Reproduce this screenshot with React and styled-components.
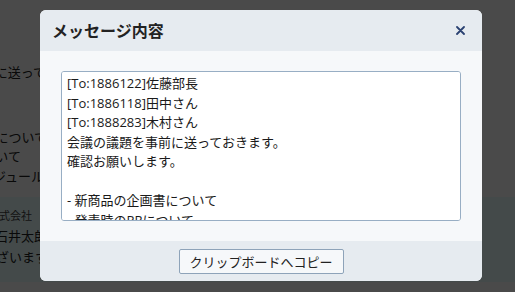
import React from 'react';
import styled, { createGlobalStyle } from 'styled-components';

const GlobalStyle = createGlobalStyle`
  html, body {
    margin: 0;
    padding: 0;
    background: #fff;
  }
  body {
    font-family: "Open Sans", "Noto Sans CJK JP", sans-serif;
    color: #333;
  }
`;

// the chat page that sits behind the dimmed overlay
const Page = styled.div`
  width: 515px;
  height: 292px;
  overflow: hidden;
  display: flex;
  flex-direction: column;
`;

const Section = styled.div`
  display: flex;
  flex-direction: column;
  padding: ${({ $pad }) => $pad || '0'};
  background: ${({ $tint }) => ($tint ? '#eaffff' : '#fff')};
  height: ${({ $h }) => $h}px;
  box-sizing: border-box;
`;

const Line = styled.div`
  width: ${({ $w }) => $w || 40}px;
  display: flex;
  justify-content: flex-end;
  white-space: nowrap;
  overflow: hidden;
  font-family: "Noto Sans CJK JP", sans-serif;
  font-size: ${({ $small }) => ($small ? '11px' : '13px')};
  line-height: ${({ $lh }) => $lh || 20}px;
  margin-top: ${({ $mt }) => $mt || 0}px;
  color: ${({ $small }) => ($small ? '#444' : '#222')};
`;

const Overlay = styled.div`
  position: fixed;
  inset: 0;
  background: rgba(0, 0, 0, 0.71);
`;

const Modal = styled.div`
  position: fixed;
  left: 40px;
  top: 10px;
  width: 442px;
  border-radius: 6px;
  overflow: hidden;
  background: #f6f8fa;
  display: flex;
  flex-direction: column;
`;

const Header = styled.div`
  height: 41px;
  background: #e6ebf0;
  display: flex;
  align-items: center;
  justify-content: space-between;
  padding: 0 17px 0 12px;
`;

const Title = styled.h2`
  margin: 0 0 2px;
  font-size: 16px;
  font-weight: 700;
  color: #222;
  font-family: "Noto Sans CJK JP", sans-serif;
`;

const CloseButton = styled.button`
  border: none;
  background: none;
  padding: 0;
  width: 10px;
  height: 10px;
  display: flex;
  align-items: center;
  justify-content: center;
  cursor: pointer;
`;

const Body = styled.div`
  padding: 20px 21px;
`;

const MessageArea = styled.textarea`
  display: block;
  width: 400px;
  height: 150px;
  box-sizing: border-box;
  margin: 0;
  padding: 2px 5px;
  border: 1px solid #98aec4;
  border-radius: 3px;
  background: #fff;
  resize: none;
  outline: none;
  font-family: "Open Sans", "Noto Sans CJK JP", sans-serif;
  font-size: 13px;
  line-height: 19.5px;
  color: #1a1a1a;
  overflow-y: scroll;

  &::-webkit-scrollbar {
    width: 10px;
  }
  &::-webkit-scrollbar-track {
    background: #fff;
  }
  &::-webkit-scrollbar-thumb {
    background: #b3c6d5;
  }
`;

const Footer = styled.div`
  height: 40px;
  background: #e6ebf0;
  display: flex;
  align-items: center;
  justify-content: center;
`;

const CopyButton = styled.button`
  width: 165px;
  height: 25px;
  border: 1px solid #8ea3b9;
  border-radius: 2px;
  background: #f6f8fa;
  font-family: "Noto Sans CJK JP", sans-serif;
  font-size: 13px;
  color: #222;
  padding: 0;
  cursor: pointer;
`;

const message = [
  '[To:1886122]佐藤部長',
  '[To:1886118]田中さん',
  '[To:1888283]木村さん',
  '会議の議題を事前に送っておきます。',
  '確認お願いします。',
  '',
  '- 新商品の企画書について',
  '- 発表時のPRについて',
  '- スケジュールについて',
].join('\n');

const App = () => (
  <>
    <GlobalStyle />
    <Page>
      <Section $h={197} $pad="62px 0 0">
        <Line $w={46}>事前に送って</Line>
        <Line $mt={45} $w={47}>企画書について</Line>
        <Line $lh={18} $w={21}>PRについて</Line>
        <Line $lh={22} $w={44}>スケジュール</Line>
      </Section>
      <Section $tint $h={85} $pad="10px 0 0">
        <Line $small $lh={16} $w={32}>株式会社</Line>
        <Line $mt={3} $w={47}>石井太郎</Line>
        <Line $lh={22} $w={48}>ございます</Line>
      </Section>
    </Page>
    <Overlay />
    <Modal>
      <Header>
        <Title>メッセージ内容</Title>
        <CloseButton aria-label="閉じる">
          <svg width="9" height="9" viewBox="0 0 9 9">
            <path d="M1 1 L8 8 M8 1 L1 8" stroke="#2b4272" strokeWidth="1.8" strokeLinecap="round" />
          </svg>
        </CloseButton>
      </Header>
      <Body>
        <MessageArea readOnly value={message} />
      </Body>
      <Footer>
        <CopyButton>クリップボードへコピー</CopyButton>
      </Footer>
    </Modal>
  </>
);

export default App;
